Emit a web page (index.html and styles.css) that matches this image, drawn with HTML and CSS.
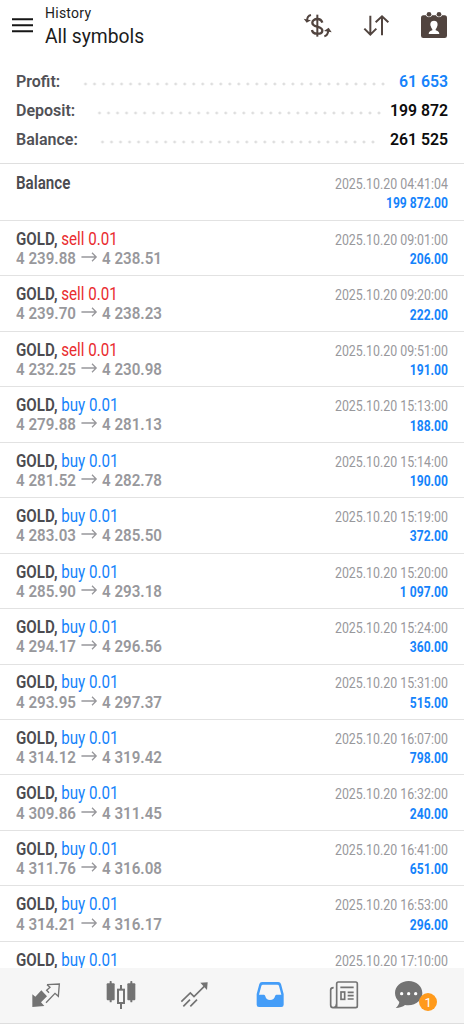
FILE: index.html
```html
<!DOCTYPE html>
<html lang="en">
<head>
<meta charset="utf-8">
<title>History</title>
<link rel="stylesheet" href="styles.css">
</head>
<body>
<div class="app">
  <header class="topbar">
    <svg class="menu" width="21" height="15" viewBox="0 0 21 15"><path d="M0 1.3h21M0 7.3h21M0 13.3h21" stroke="#161616" stroke-width="2.1"/></svg>
    <div class="titles"><div class="screen">History</div><div class="symbols">All symbols</div></div>
    <svg class="tools" width="174" height="50" viewBox="0 0 522 150" fill="none" stroke="#51443f">
      <path d="M97 68C94 59 88 57 82 57C73 57 67 62 67 68C67 75 74 78 82 80C92 83 97 86 97 92C97 98 90 101 82 101C73 101 67 98 66 90" stroke-width="7"/>
      <path d="M82 44V110" stroke-width="6"/>
      <path d="M63 45C54 47 51 53 51 63" stroke-width="6"/><path d="M41 56L50 68L63 61Z" fill="#51443f" stroke="none"/>
      <path d="M103 109C112 107 114 101 115 92" stroke-width="6"/><path d="M102 93L116 83L125 97Z" fill="#51443f" stroke="none"/>
      <path d="M241 47V103M223 86L241 104L259 86M276 106V50M257 67L276 49L295 67" stroke-width="6"/>
      <g fill="#51443f" stroke="none"><path fill-rule="evenodd" d="M400 46H408C410 54 424 54 426 46H438C440 54 454 54 456 46H464Q471 46 471 54V107Q471 114 464 114H400Q393 114 393 107V54Q393 46 400 46ZM432 62C422 62 420 71 422 78Q424 85 427 88V91C421 93 416 95 416 102H448C448 95 443 93 437 91V88Q440 85 442 78C444 71 442 62 432 62Z"/><circle cx="417" cy="43" r="7"/><circle cx="447" cy="43" r="7"/></g>
    </svg>
  </header>
  <section class="summary">
    <div class="total"><b>Profit:</b><i class="dots profit-dots"></i><b class="amount blue">61 653</b></div>
    <div class="total"><b>Deposit:</b><i class="dots deposit-dots"></i><b class="amount">199 872</b></div>
    <div class="total"><b>Balance:</b><i class="dots balance-dots"></i><b class="amount">261 525</b></div>
  </section>
  <main class="deals">
    <article class="deal first"><div class="left"><div class="name"><b>Balance</b></div></div><div class="right"><div class="date">2025.10.20 04:41:04</div><div class="value">199 872.00</div></div></article>
    <article class="deal"><div class="left"><div class="name"><b>GOLD,</b> <span class="red">sell 0.01</span></div><div class="prices">4 239.88<svg class="arrow" viewBox="0 0 20 12"><path d="M0 6H18M13 1.5L18 6L13 10.5"/></svg>4 238.51</div></div><div class="right"><div class="date">2025.10.20 09:01:00</div><div class="value">206.00</div></div></article>
    <article class="deal"><div class="left"><div class="name"><b>GOLD,</b> <span class="red">sell 0.01</span></div><div class="prices">4 239.70<svg class="arrow" viewBox="0 0 20 12"><path d="M0 6H18M13 1.5L18 6L13 10.5"/></svg>4 238.23</div></div><div class="right"><div class="date">2025.10.20 09:20:00</div><div class="value">222.00</div></div></article>
    <article class="deal"><div class="left"><div class="name"><b>GOLD,</b> <span class="red">sell 0.01</span></div><div class="prices">4 232.25<svg class="arrow" viewBox="0 0 20 12"><path d="M0 6H18M13 1.5L18 6L13 10.5"/></svg>4 230.98</div></div><div class="right"><div class="date">2025.10.20 09:51:00</div><div class="value">191.00</div></div></article>
    <article class="deal"><div class="left"><div class="name"><b>GOLD,</b> <span class="blue">buy 0.01</span></div><div class="prices">4 279.88<svg class="arrow" viewBox="0 0 20 12"><path d="M0 6H18M13 1.5L18 6L13 10.5"/></svg>4 281.13</div></div><div class="right"><div class="date">2025.10.20 15:13:00</div><div class="value">188.00</div></div></article>
    <article class="deal"><div class="left"><div class="name"><b>GOLD,</b> <span class="blue">buy 0.01</span></div><div class="prices">4 281.52<svg class="arrow" viewBox="0 0 20 12"><path d="M0 6H18M13 1.5L18 6L13 10.5"/></svg>4 282.78</div></div><div class="right"><div class="date">2025.10.20 15:14:00</div><div class="value">190.00</div></div></article>
    <article class="deal"><div class="left"><div class="name"><b>GOLD,</b> <span class="blue">buy 0.01</span></div><div class="prices">4 283.03<svg class="arrow" viewBox="0 0 20 12"><path d="M0 6H18M13 1.5L18 6L13 10.5"/></svg>4 285.50</div></div><div class="right"><div class="date">2025.10.20 15:19:00</div><div class="value">372.00</div></div></article>
    <article class="deal"><div class="left"><div class="name"><b>GOLD,</b> <span class="blue">buy 0.01</span></div><div class="prices">4 285.90<svg class="arrow" viewBox="0 0 20 12"><path d="M0 6H18M13 1.5L18 6L13 10.5"/></svg>4 293.18</div></div><div class="right"><div class="date">2025.10.20 15:20:00</div><div class="value">1 097.00</div></div></article>
    <article class="deal"><div class="left"><div class="name"><b>GOLD,</b> <span class="blue">buy 0.01</span></div><div class="prices">4 294.17<svg class="arrow" viewBox="0 0 20 12"><path d="M0 6H18M13 1.5L18 6L13 10.5"/></svg>4 296.56</div></div><div class="right"><div class="date">2025.10.20 15:24:00</div><div class="value">360.00</div></div></article>
    <article class="deal"><div class="left"><div class="name"><b>GOLD,</b> <span class="blue">buy 0.01</span></div><div class="prices">4 293.95<svg class="arrow" viewBox="0 0 20 12"><path d="M0 6H18M13 1.5L18 6L13 10.5"/></svg>4 297.37</div></div><div class="right"><div class="date">2025.10.20 15:31:00</div><div class="value">515.00</div></div></article>
    <article class="deal"><div class="left"><div class="name"><b>GOLD,</b> <span class="blue">buy 0.01</span></div><div class="prices">4 314.12<svg class="arrow" viewBox="0 0 20 12"><path d="M0 6H18M13 1.5L18 6L13 10.5"/></svg>4 319.42</div></div><div class="right"><div class="date">2025.10.20 16:07:00</div><div class="value">798.00</div></div></article>
    <article class="deal"><div class="left"><div class="name"><b>GOLD,</b> <span class="blue">buy 0.01</span></div><div class="prices">4 309.86<svg class="arrow" viewBox="0 0 20 12"><path d="M0 6H18M13 1.5L18 6L13 10.5"/></svg>4 311.45</div></div><div class="right"><div class="date">2025.10.20 16:32:00</div><div class="value">240.00</div></div></article>
    <article class="deal"><div class="left"><div class="name"><b>GOLD,</b> <span class="blue">buy 0.01</span></div><div class="prices">4 311.76<svg class="arrow" viewBox="0 0 20 12"><path d="M0 6H18M13 1.5L18 6L13 10.5"/></svg>4 316.08</div></div><div class="right"><div class="date">2025.10.20 16:41:00</div><div class="value">651.00</div></div></article>
    <article class="deal"><div class="left"><div class="name"><b>GOLD,</b> <span class="blue">buy 0.01</span></div><div class="prices">4 314.21<svg class="arrow" viewBox="0 0 20 12"><path d="M0 6H18M13 1.5L18 6L13 10.5"/></svg>4 316.17</div></div><div class="right"><div class="date">2025.10.20 16:53:00</div><div class="value">296.00</div></div></article>
    <article class="deal"><div class="left"><div class="name"><b>GOLD,</b> <span class="blue">buy 0.01</span></div></div><div class="right"><div class="date">2025.10.20 17:10:00</div></div></article>
  </main>
  <nav class="tabs">
    <svg width="30" height="30" viewBox="93 120 90 90"><path d="M97 163L106 170L124 151L141 169L123 187L133 198L97 201Z" fill="#737373"/><path d="M141 134L178 132L175 169L165 160L138 188M141 134L150 142L140 151L147 158" fill="none" stroke="#737373" stroke-width="4"/></svg>
    <svg width="30" height="30" viewBox="316 120 90 90" fill="#737373"><rect x="318" y="130" width="24" height="51" rx="3"/><rect x="327" y="123" width="6" height="64" rx="2"/><rect x="380" y="130" width="24" height="51" rx="3"/><rect x="389" y="123" width="6" height="64" rx="2"/><path d="M361 135V148M361 190V207" stroke="#737373" stroke-width="6"/><rect x="352" y="149" width="18" height="40" fill="none" stroke="#737373" stroke-width="6"/></svg>
    <svg width="30" height="30" viewBox="541 120 90 90" fill="none" stroke="#737373" stroke-width="5"><path d="M545 185L572 159L583 170L619 134M551 199L571 179M572 199L592 179"/><path d="M602 128L624 127L622 150Z" fill="#737373" stroke="none"/></svg>
    <svg width="30" height="30" viewBox="67 120 90 90"><path fill="#449df8" fill-rule="evenodd" d="M88 126H137Q143 126 145 132L153 162V194Q153 201 146 201H79Q72 201 72 194V162L80 132Q82 126 88 126ZM91 134Q87 134 86 138L79 164H94Q97 164 98 169Q100 180 112 180Q125 180 127 169Q128 164 131 164H146L139 138Q138 134 134 134Z"/></svg>
    <svg width="30" height="30" viewBox="292 120 90 90" fill="none" stroke="#737373" stroke-width="5"><path d="M320 126H372Q377 126 377 131V198Q377 203 372 203H304Q297 203 297 195V150Q297 143 306 143M315 202V131Q315 126 320 126M306 203Q315 201 315 190M326 142H366M348 157H366M348 167H366M348 177H366"/><rect x="328" y="156" width="11" height="22"/></svg>
    <div class="chat"><svg width="30" height="30" viewBox="486 120 90 90"><path fill="#737373" d="M530 123C507 123 489 139 489 159C489 170 494 179 502 186C501 193 497 199 491 204C503 204 513 200 519 195C550 200 571 181 571 159C571 139 553 123 530 123Z"/><g fill="#fff"><circle cx="509" cy="161" r="5"/><circle cx="530" cy="161" r="5"/><circle cx="551" cy="161" r="5"/></g></svg><span class="badge">1</span></div>
  </nav>
</div>
</body>
</html>
```
FILE: styles.css
```css
* { box-sizing: border-box; }
body { margin: 0; background: #fff; font-family: Roboto, "Liberation Sans", sans-serif; }
.app { width: 464px; height: 1024px; overflow: hidden; display: flex; flex-direction: column; }
.topbar { height: 66px; flex: none; display: flex; align-items: flex-start; padding-left: 12px; color: #1c1c1c; }
.menu { margin-top: 18px; flex: none; }
.titles { margin: 4px 0 0 12px; white-space: nowrap; }
.screen { font-size: 14px; line-height: 19px; letter-spacing: .25px; }
.symbols { font-size: 19.3px; line-height: 27px; }
.tools { margin-left: auto; flex: none; }
.summary { flex: none; height: 98px; padding: 1px 16px 0; border-bottom: 1px solid #dfdfdf; }
.total { display: flex; align-items: center; height: 28.9px; font-size: 16px; color: #515156; }
.total b { font-weight: 600; white-space: nowrap; }
.total .amount { margin-left: auto; color: #0c0c0c; font-size: 15.8px; }
.total .blue, .total .amount.blue, .blue { color: #1583fb; }
.red { color: #e92b2e; }
.dots { height: 4px; flex: none; margin-top: 6px; background: radial-gradient(circle, #dedede 1px, transparent 1.8px) 0 0 / 9.03px 4px repeat-x; }
.profit-dots { width: 304px; margin-left: 20.5px; }
.deposit-dots { width: 286px; margin-left: 20px; }
.balance-dots { width: 277px; margin-left: 20px; }
.deals { flex: 1; min-height: 0; overflow: hidden; }
.deal { height: 55.47px; border-bottom: 1px solid #e2e2e2; padding: 8.9px 16px 0; display: flex; justify-content: space-between; white-space: nowrap; }
.deal.first { height: 56.8px; padding-top: 10px; }
.left { font-size: 17.6px; line-height: 19.3px; }
.name { transform: scaleX(.86); transform-origin: left; color: #4b4b50; }
.name b { font-weight: 600; }
.prices { font-size: 17.4px; line-height: 19px; transform: scaleX(.87); transform-origin: left; color: #98989c; font-weight: 600; }
.arrow { width: 19px; height: 12px; margin: 0 5px 0 6px; vertical-align: 1px; fill: none; stroke: #98989c; stroke-width: 1.6; }
.right { font-size: 15px; line-height: 19.4px; text-align: right; padding-top: 1px; }
.date { transform: scaleX(.825); transform-origin: right; color: #98989c; }
.value { transform: scaleX(.805); transform-origin: right; color: #1583fb; font-weight: 700; }
.tabs { height: 56px; flex: none; background: #f6f6f6; border-bottom: 1px solid #dedede; display: flex; gap: 44.6px; padding: 12px 0 0 31px; }
.tabs > * { flex: none; }
.chat { position: relative; width: 43px; margin-left: -9.8px; }
.badge { position: absolute; left: 25px; top: 13px; width: 18px; height: 18px; border-radius: 50%; background: #ff9a1b; color: #fff; font-size: 13px; line-height: 19px; text-align: center; }
```
